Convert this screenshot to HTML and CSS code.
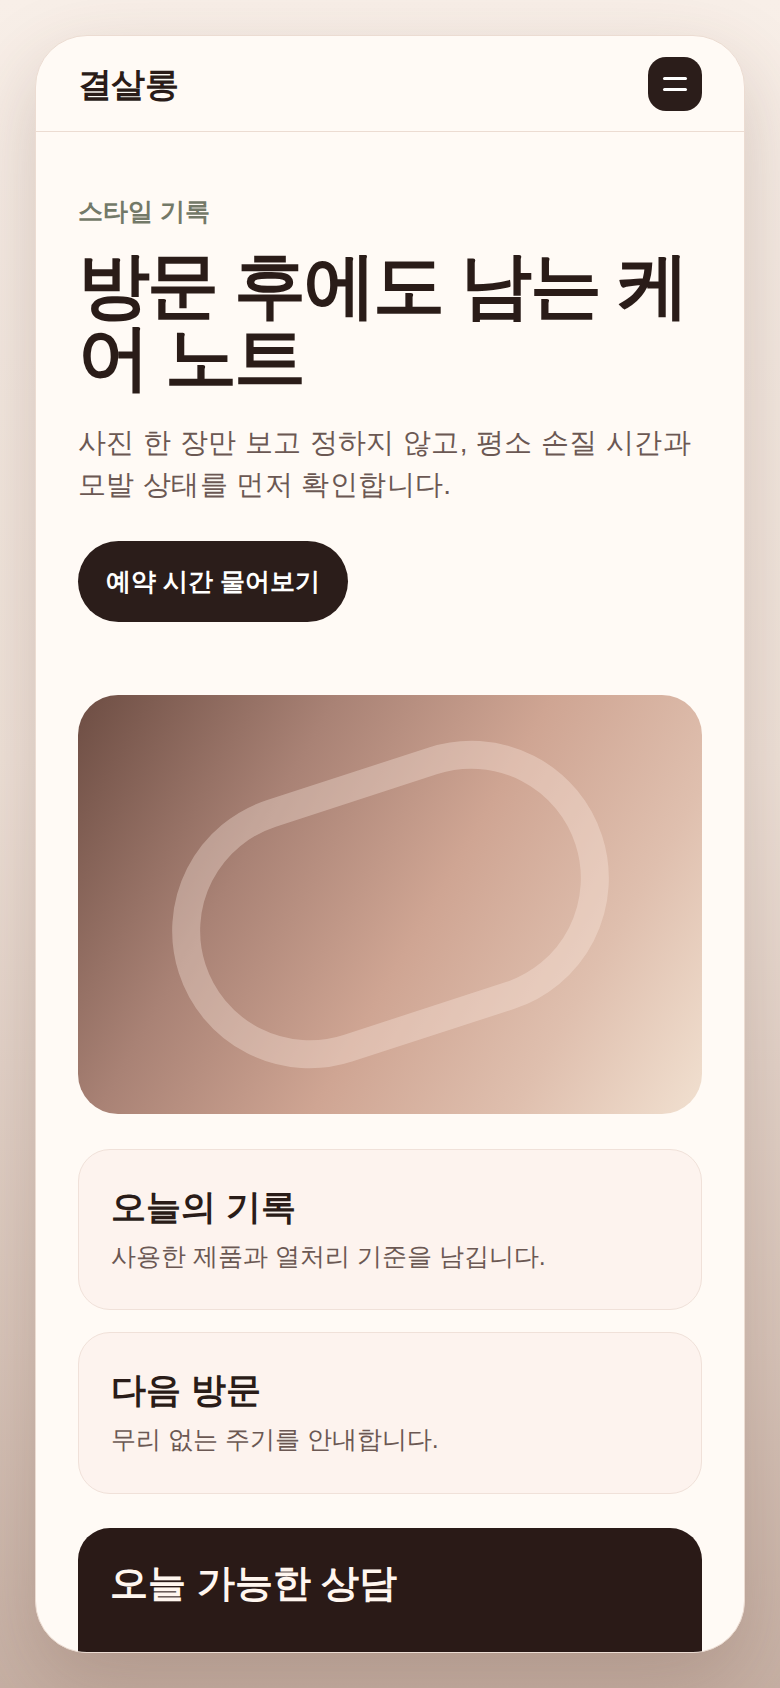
FILE: index.html
```html
<!DOCTYPE html>
<html lang="ko">
<head>
    <meta charset="UTF-8">
    <meta name="viewport" content="width=device-width, initial-scale=1.0">
    <title>결살롱 - 케어 노트</title>
    <link rel="stylesheet" href="styles.css">
</head>
<body>
    <div class="phone">
        <!-- Top bar -->
        <header class="topbar">
            <span class="brand">결살롱</span>
            <button class="menu-btn" aria-label="메뉴 열기">
                <span></span>
                <span></span>
            </button>
        </header>

        <main class="content">
            <!-- Hero -->
            <section class="hero">
                <p class="eyebrow">스타일 기록</p>
                <h1>방문 후에도 남는 케어 노트</h1>
                <p class="lead">사진 한 장만 보고 정하지 않고, 평소 손질 시간과 모발 상태를 먼저 확인합니다.</p>
                <a class="cta" href="#today">예약 시간 물어보기</a>
            </section>

            <div class="visual">
                <div class="ring"></div>
            </div>

            <!-- Notes -->
            <div class="notes">
                <article class="note">
                    <h2>오늘의 기록</h2>
                    <p>사용한 제품과 열처리 기준을 남깁니다.</p>
                </article>
                <article class="note">
                    <h2>다음 방문</h2>
                    <p>무리 없는 주기를 안내합니다.</p>
                </article>
            </div>

            <section class="today" id="today">
                <h2>오늘 가능한 상담</h2>
            </section>
        </main>
    </div>
</body>
</html>
```

FILE: styles.css
```css
* {
    box-sizing: border-box;
}

html, body {
    height: 100%;
}

body {
    margin: 0;
    padding: 35px;
    font-family: sans-serif;
    color: #2a1c18;
    background: linear-gradient(180deg, #f8efe8 0%, #efe2d9 45%, #d8c5ba 80%, #c6b0a4 100%);
}

.phone {
    height: 100%;
    background: #fffaf5;
    border: 1px solid #ecdcd2;
    border-radius: 52px;
    overflow: hidden;
    box-shadow: 0 30px 80px rgba(90, 55, 40, 0.22);
}

/* header */
.topbar {
    display: flex;
    align-items: center;
    justify-content: space-between;
    padding: 20px 42px;
    padding-top: 21px;
    border-bottom: 1px solid #ecdcd2;
}

.brand {
    font-size: 34px;
    font-weight: 700;
    letter-spacing: -0.02em;
    line-height: 1.2;
}

.menu-btn {
    width: 54px;
    height: 54px;
    border: none;
    border-radius: 18px;
    background: #2b1d1a;
    display: flex;
    flex-direction: column;
    align-items: center;
    justify-content: center;
    gap: 8px;
    padding: 0;
    cursor: pointer;
}

.menu-btn span {
    display: block;
    width: 24px;
    height: 3px;
    border-radius: 2px;
    background: #fff;
}

/* content */
.content {
    padding: 63px 42px 0;
}

.eyebrow {
    margin: 0 0 21px;
    font-size: 25px;
    font-weight: 700;
    line-height: 1.3;
    color: #737968;
}

h1 {
    margin: 0;
    font-size: 72px;
    font-weight: 700;
    line-height: 1.01;
    letter-spacing: -0.035em;
}

.lead {
    margin: 28px 0 0;
    font-size: 28px;
    line-height: 1.5;
    letter-spacing: 0.4px;
    color: #6b5853;
}

.cta {
    display: inline-block;
    margin-top: 35px;
    padding: 26px 28px;
    border-radius: 999px;
    background: #2b1d1a;
    color: #fff;
    font-size: 25px;
    font-weight: 700;
    line-height: 1.17;
    text-decoration: none;
}

.visual {
    margin-top: 73px;
    height: 419px;
    border-radius: 40px;
    background: linear-gradient(120deg, #6d4d43 0%, #a98275 30%, #cfa593 55%, #dfbfae 78%, #f1e0d0 100%);
    display: flex;
    align-items: center;
    justify-content: center;
    overflow: hidden;
}

.ring {
    flex-shrink: 0;
    width: 445px;
    height: 275px;
    border: 28px solid rgba(255, 240, 232, 0.33);
    border-radius: 999px;
    transform: rotate(-18deg);
}

.notes {
    margin-top: 35px;
    display: grid;
    gap: 22px;
}

.note {
    background: #fdf3ee;
    border: 1px solid #f0e1d9;
    border-radius: 32px;
    padding: 35px 32px 34px;
}

.note h2 {
    margin: 0;
    font-size: 35px;
    font-weight: 700;
    line-height: 1.25;
}

.note p {
    margin: 9px 0 0;
    font-size: 25px;
    line-height: 1.5;
    color: #6b5853;
}

.today {
    margin-top: 34px;
    background: #2a1a17;
    border-radius: 32px;
    padding: 33px 32px 140px;
    color: #fff6ef;
}

.today h2 {
    margin: 0;
    font-size: 38px;
    font-weight: 700;
    line-height: 1.2;
}
```
